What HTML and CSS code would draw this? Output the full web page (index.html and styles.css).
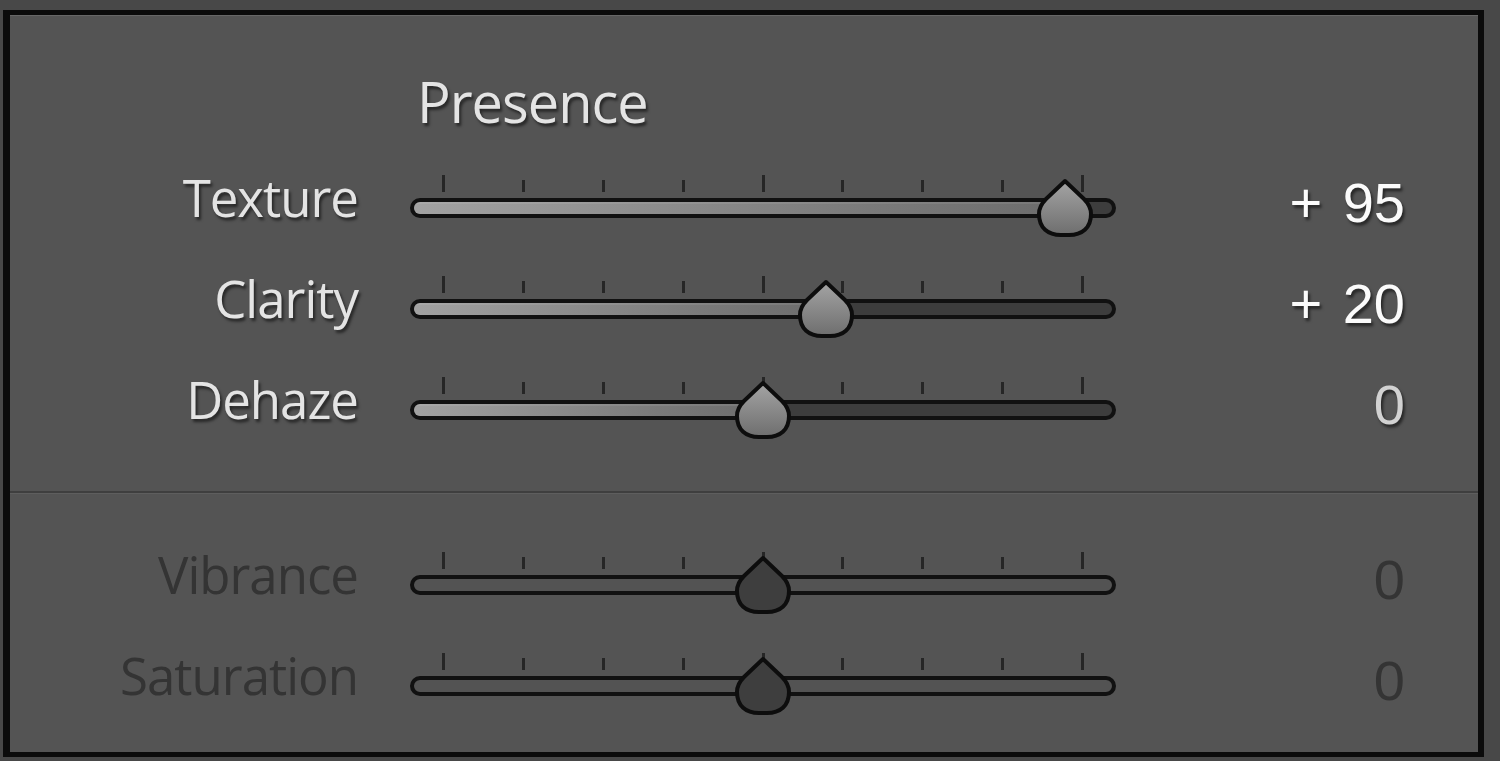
FILE: index.html
```html
<!DOCTYPE html>
<html lang="en">
<head>
    <meta charset="UTF-8">
    <meta name="viewport" content="width=device-width, initial-scale=1.0">
    <title>Presence</title>
    <link rel="stylesheet" href="styles.css">
</head>
<body>
    <svg class="defs" width="0" height="0" aria-hidden="true">
        <defs>
            <linearGradient id="knob" x1="0" y1="0" x2="0" y2="1">
                <stop offset="0" stop-color="#a4a4a4"/>
                <stop offset="1" stop-color="#6e6e6e"/>
            </linearGradient>
        </defs>
    </svg>

    <div id="panel">
        <div class="section">
            <h2 class="heading">Presence</h2>

            <div class="row">
                <span class="label">Texture</span>
                <div class="slider">
                    <div class="ticks"><i class="major"></i><i></i><i></i><i></i><i class="major"></i><i></i><i></i><i></i><i class="major"></i></div>
                    <div class="track"><div class="fill" style="width: 651px"></div></div>
                    <svg class="thumb" style="left: 625px" viewBox="0 0 60 62"><path d="M30 4 L49 22 C54 27 56 31 56 37 C56 51 47 58 34 58 L26 58 C13 58 4 51 4 37 C4 31 6 27 11 22 Z"/></svg>
                </div>
                <span class="value">+ 95</span>
            </div>

            <div class="row">
                <span class="label">Clarity</span>
                <div class="slider">
                    <div class="ticks"><i class="major"></i><i></i><i></i><i></i><i class="major"></i><i></i><i></i><i></i><i class="major"></i></div>
                    <div class="track"><div class="fill" style="width: 412px"></div></div>
                    <svg class="thumb" style="left: 386px" viewBox="0 0 60 62"><path d="M30 4 L49 22 C54 27 56 31 56 37 C56 51 47 58 34 58 L26 58 C13 58 4 51 4 37 C4 31 6 27 11 22 Z"/></svg>
                </div>
                <span class="value">+ 20</span>
            </div>

            <div class="row">
                <span class="label">Dehaze</span>
                <div class="slider">
                    <div class="ticks"><i class="major"></i><i></i><i></i><i></i><i class="major"></i><i></i><i></i><i></i><i class="major"></i></div>
                    <div class="track"><div class="fill" style="width: 349px"></div></div>
                    <svg class="thumb" style="left: 323px" viewBox="0 0 60 62"><path d="M30 4 L49 22 C54 27 56 31 56 37 C56 51 47 58 34 58 L26 58 C13 58 4 51 4 37 C4 31 6 27 11 22 Z"/></svg>
                </div>
                <span class="value zero">0</span>
            </div>
        </div>

        <div class="section disabled">
            <div class="row">
                <span class="label">Vibrance</span>
                <div class="slider">
                    <div class="ticks"><i class="major"></i><i></i><i></i><i></i><i class="major"></i><i></i><i></i><i></i><i class="major"></i></div>
                    <div class="track"></div>
                    <svg class="thumb" style="left: 323px" viewBox="0 0 60 62"><path d="M30 4 L49 22 C54 27 56 31 56 37 C56 51 47 58 34 58 L26 58 C13 58 4 51 4 37 C4 31 6 27 11 22 Z"/></svg>
                </div>
                <span class="value">0</span>
            </div>

            <div class="row">
                <span class="label">Saturation</span>
                <div class="slider">
                    <div class="ticks"><i class="major"></i><i></i><i></i><i></i><i class="major"></i><i></i><i></i><i></i><i class="major"></i></div>
                    <div class="track"></div>
                    <svg class="thumb" style="left: 323px" viewBox="0 0 60 62"><path d="M30 4 L49 22 C54 27 56 31 56 37 C56 51 47 58 34 58 L26 58 C13 58 4 51 4 37 C4 31 6 27 11 22 Z"/></svg>
                </div>
                <span class="value">0</span>
            </div>
        </div>
    </div>
</body>
</html>
```

FILE: styles.css
```css
* {
    box-sizing: border-box;
}
body {
    margin: 0;
    padding: 10px 16px 4px 3px;
    height: 761px;
    overflow: hidden;
    background-color: #484848;
    font-family: "Open Sans", "Noto Sans", sans-serif;
    color: #e4e4e4;
}
.defs {
    position: absolute;
}
#panel {
    height: 747px;
    border-style: solid;
    border-color: #0b0b0b;
    border-width: 5px 6px 5px 7px;
    background-color: #545454;
    box-shadow: inset 0 1px 0 #676767;
}
.section {
    height: 478px;
    border-bottom: 2px solid #3f3f3f;
}
.section.disabled {
    height: auto;
    border-bottom: none;
    box-shadow: inset 0 1px 0 #5e5e5e;
    padding-top: 1px;
}
.heading {
    margin: 0;
    height: 102px;
    padding: 58px 0 0 407px;
    font-size: 56px;
    font-weight: normal;
    line-height: 56px;
    letter-spacing: -1px;
    text-shadow: 2px 3px 3px rgba(0, 0, 0, 0.55);
}
.row {
    display: flex;
    align-items: flex-end;
    height: 101px;
}
.label {
    width: 348px;
    text-align: right;
    font-size: 51px;
    line-height: 51px;
    letter-spacing: -1px;
    margin-bottom: -5px;
    text-shadow: 2px 3px 3px rgba(0, 0, 0, 0.55);
}
.value {
    width: 289px;
    text-align: right;
    font-family: "Liberation Sans", Arial, sans-serif;
    font-size: 56px;
    line-height: 56px;
    word-spacing: 5px;
    margin-bottom: -13px;
    color: #fbfbfb;
    text-shadow: 2px 3px 3px rgba(0, 0, 0, 0.55);
}
.value.zero {
    color: #d2d2d2;
}
.slider {
    position: relative;
    width: 706px;
    margin-left: 52px;
}
.ticks {
    display: flex;
    justify-content: space-between;
    align-items: flex-end;
    height: 17px;
    padding: 0 32px;
    margin-bottom: 6px;
}
.ticks i {
    width: 3px;
    height: 12px;
    background-color: #262626;
}
.ticks i.major {
    height: 17px;
}
.track {
    height: 20px;
    border: 4px solid #111;
    border-radius: 10px;
    background-color: #3d3d3d;
    overflow: hidden;
}
.fill {
    height: 100%;
    background: linear-gradient(90deg, #a2a2a2, #7a7a7a 70%, #6c6c6c);
    box-shadow: inset 0 2px 0 rgba(255, 255, 255, 0.08);
}
.thumb {
    position: absolute;
    top: 2px;
    width: 60px;
    height: 62px;
}
.thumb path {
    fill: url(#knob);
    stroke: #0d0d0d;
    stroke-width: 4;
    stroke-linejoin: round;
}
.disabled .label,
.disabled .value {
    color: #343434;
    text-shadow: none;
}
.disabled .track {
    background-color: #535353;
}
.disabled .thumb path {
    fill: #3e3e3e;
}
```
